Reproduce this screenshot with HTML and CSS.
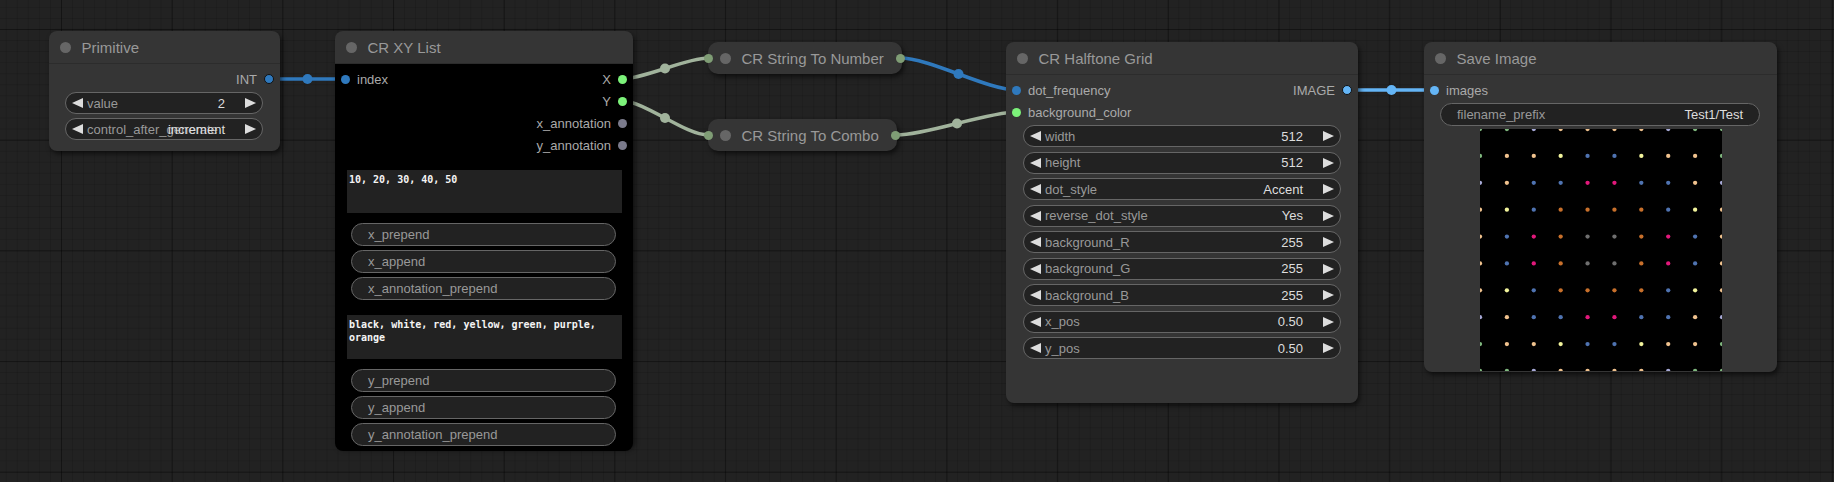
FILE: index.html
```html
<!DOCTYPE html>
<html>
<head>
  <meta charset="UTF-8">
  <title>ComfyUI - Halftone Grid</title>
  <link rel="stylesheet" href="styles.css">
</head>
<body>
  <div class="canvas">

    <!-- links between nodes -->
    <svg class="links" width="1834" height="482" viewBox="0 0 1834 482">
      <g fill="none" stroke-width="3.5">
        <path class="link-int" d="M270 79 L345 79"/>
        <path class="link-str" d="M622 79 C644 79 686 58 708 58"/>
        <path class="link-str" d="M622 101 C645 101 685 135 708 135"/>
        <path class="link-int" d="M900 58 C930 58 987 90 1017 90"/>
        <path class="link-str" d="M897 135 C927 135 987 112 1017 112"/>
        <path class="link-image" d="M1348 90 L1435 90"/>
      </g>
      <circle class="mark-int" cx="307.5" cy="79" r="5"/>
      <circle class="mark-str" cx="665" cy="68.5" r="5"/>
      <circle class="mark-str" cx="665" cy="118" r="5"/>
      <circle class="mark-int" cx="958.5" cy="74" r="5"/>
      <circle class="mark-str" cx="957" cy="123.5" r="5"/>
      <circle class="mark-image" cx="1391.5" cy="90" r="5"/>
    </svg>

    <!-- Primitive -->
    <div class="node node-primitive">
      <div class="node-title"><span class="title-dot"></span>Primitive</div>
      <div class="node-body">
        <div class="slot-row">
          <span></span>
          <span class="slot-out">INT<i class="dot dot-int ring"></i></span>
        </div>
        <div class="widgets">
          <div class="widget num">
            <i class="arrow-l"></i><span class="w-label">value</span><span class="w-value">2</span><i class="arrow-r"></i>
          </div>
          <div class="widget num">
            <i class="arrow-l"></i><span class="w-label clip">control_after_generate</span><span class="w-value">increment</span><i class="arrow-r"></i>
          </div>
        </div>
      </div>
    </div>

    <!-- CR XY List -->
    <div class="node node-xy">
      <div class="node-title"><span class="title-dot"></span>CR XY List</div>
      <div class="node-body black">
        <div class="slot-row">
          <span class="slot-in"><i class="dot dot-int"></i>index</span>
          <span class="slot-out">X<i class="dot dot-str"></i></span>
        </div>
        <div class="slot-row">
          <span></span>
          <span class="slot-out">Y<i class="dot dot-str"></i></span>
        </div>
        <div class="slot-row">
          <span></span>
          <span class="slot-out">x_annotation<i class="dot dot-any"></i></span>
        </div>
        <div class="slot-row">
          <span></span>
          <span class="slot-out">y_annotation<i class="dot dot-any"></i></span>
        </div>

        <div class="text-area first">10, 20, 30, 40, 50</div>
        <div class="widgets tall">
          <div class="widget text"><span class="w-label">x_prepend</span></div>
          <div class="widget text"><span class="w-label">x_append</span></div>
          <div class="widget text"><span class="w-label">x_annotation_prepend</span></div>
        </div>

        <div class="text-area second">black, white, red, yellow, green, purple,<br>orange</div>
        <div class="widgets tall">
          <div class="widget text"><span class="w-label">y_prepend</span></div>
          <div class="widget text"><span class="w-label">y_append</span></div>
          <div class="widget text"><span class="w-label">y_annotation_prepend</span></div>
        </div>
      </div>
    </div>

    <!-- collapsed nodes -->
    <div class="node collapsed node-to-number">
      <i class="dot dot-sage edge-in"></i>
      <span class="title-dot"></span>CR String To Number
      <i class="dot dot-sage edge-out"></i>
    </div>
    <div class="node collapsed node-to-combo">
      <i class="dot dot-sage edge-in"></i>
      <span class="title-dot"></span>CR String To Combo
      <i class="dot dot-sage edge-out"></i>
    </div>

    <!-- CR Halftone Grid -->
    <div class="node node-halftone">
      <div class="node-title"><span class="title-dot"></span>CR Halftone Grid</div>
      <div class="node-body">
        <div class="slot-row">
          <span class="slot-in"><i class="dot dot-int"></i>dot_frequency</span>
          <span class="slot-out">IMAGE<i class="dot dot-image ring"></i></span>
        </div>
        <div class="slot-row">
          <span class="slot-in"><i class="dot dot-str"></i>background_color</span>
        </div>
        <div class="widgets loose">
          <div class="widget num"><i class="arrow-l"></i><span class="w-label">width</span><span class="w-value">512</span><i class="arrow-r"></i></div>
          <div class="widget num"><i class="arrow-l"></i><span class="w-label">height</span><span class="w-value">512</span><i class="arrow-r"></i></div>
          <div class="widget num"><i class="arrow-l"></i><span class="w-label">dot_style</span><span class="w-value">Accent</span><i class="arrow-r"></i></div>
          <div class="widget num"><i class="arrow-l"></i><span class="w-label">reverse_dot_style</span><span class="w-value">Yes</span><i class="arrow-r"></i></div>
          <div class="widget num"><i class="arrow-l"></i><span class="w-label">background_R</span><span class="w-value">255</span><i class="arrow-r"></i></div>
          <div class="widget num"><i class="arrow-l"></i><span class="w-label">background_G</span><span class="w-value">255</span><i class="arrow-r"></i></div>
          <div class="widget num"><i class="arrow-l"></i><span class="w-label">background_B</span><span class="w-value">255</span><i class="arrow-r"></i></div>
          <div class="widget num"><i class="arrow-l"></i><span class="w-label">x_pos</span><span class="w-value">0.50</span><i class="arrow-r"></i></div>
          <div class="widget num"><i class="arrow-l"></i><span class="w-label">y_pos</span><span class="w-value">0.50</span><i class="arrow-r"></i></div>
        </div>
      </div>
    </div>

    <!-- Save Image -->
    <div class="node node-save">
      <div class="node-title"><span class="title-dot"></span>Save Image</div>
      <div class="node-body">
        <div class="slot-row">
          <span class="slot-in"><i class="dot dot-image"></i>images</span>
        </div>
        <div class="widgets">
          <div class="widget text tall-one"><span class="w-label">filename_prefix</span><span class="w-value">Test1/Test</span></div>
        </div>
        <div class="preview">
          <svg width="242" height="242" viewBox="0 0 90 90">
            <rect width="90" height="90" fill="#000"/>
            <g class="c-g"><circle cx="0" cy="0" r=".8"/><circle cx="10" cy="0" r=".8"/><circle cx="80" cy="0" r=".8"/><circle cx="90" cy="0" r=".8"/><circle cx="0" cy="10" r=".8"/><circle cx="90" cy="10" r=".8"/><circle cx="0" cy="80" r=".8"/><circle cx="90" cy="80" r=".8"/><circle cx="0" cy="90" r=".8"/><circle cx="10" cy="90" r=".8"/><circle cx="80" cy="90" r=".8"/><circle cx="90" cy="90" r=".8"/></g>
            <g class="c-l"><circle cx="20" cy="0" r=".8"/><circle cx="70" cy="0" r=".8"/><circle cx="0" cy="20" r=".8"/><circle cx="90" cy="20" r=".8"/><circle cx="0" cy="70" r=".8"/><circle cx="90" cy="70" r=".8"/><circle cx="20" cy="90" r=".8"/><circle cx="70" cy="90" r=".8"/></g>
            <g class="c-p"><circle cx="30" cy="0" r=".8"/><circle cx="40" cy="0" r=".8"/><circle cx="50" cy="0" r=".8"/><circle cx="60" cy="0" r=".8"/><circle cx="10" cy="10" r=".8"/><circle cx="20" cy="10" r=".8"/><circle cx="70" cy="10" r=".8"/><circle cx="80" cy="10" r=".8"/><circle cx="10" cy="20" r=".8"/><circle cx="80" cy="20" r=".8"/><circle cx="0" cy="30" r=".8"/><circle cx="90" cy="30" r=".8"/><circle cx="0" cy="40" r=".8"/><circle cx="90" cy="40" r=".8"/><circle cx="0" cy="50" r=".8"/><circle cx="90" cy="50" r=".8"/><circle cx="0" cy="60" r=".8"/><circle cx="90" cy="60" r=".8"/><circle cx="10" cy="70" r=".8"/><circle cx="80" cy="70" r=".8"/><circle cx="10" cy="80" r=".8"/><circle cx="20" cy="80" r=".8"/><circle cx="70" cy="80" r=".8"/><circle cx="80" cy="80" r=".8"/><circle cx="30" cy="90" r=".8"/><circle cx="40" cy="90" r=".8"/><circle cx="50" cy="90" r=".8"/><circle cx="60" cy="90" r=".8"/></g>
            <g class="c-y"><circle cx="30" cy="10" r=".8"/><circle cx="60" cy="10" r=".8"/><circle cx="10" cy="30" r=".8"/><circle cx="80" cy="30" r=".8"/><circle cx="10" cy="60" r=".8"/><circle cx="80" cy="60" r=".8"/><circle cx="30" cy="80" r=".8"/><circle cx="60" cy="80" r=".8"/></g>
            <g class="c-b"><circle cx="40" cy="10" r=".8"/><circle cx="50" cy="10" r=".8"/><circle cx="20" cy="20" r=".8"/><circle cx="30" cy="20" r=".8"/><circle cx="60" cy="20" r=".8"/><circle cx="70" cy="20" r=".8"/><circle cx="20" cy="30" r=".8"/><circle cx="70" cy="30" r=".8"/><circle cx="10" cy="40" r=".8"/><circle cx="80" cy="40" r=".8"/><circle cx="10" cy="50" r=".8"/><circle cx="80" cy="50" r=".8"/><circle cx="20" cy="60" r=".8"/><circle cx="70" cy="60" r=".8"/><circle cx="20" cy="70" r=".8"/><circle cx="30" cy="70" r=".8"/><circle cx="60" cy="70" r=".8"/><circle cx="70" cy="70" r=".8"/><circle cx="40" cy="80" r=".8"/><circle cx="50" cy="80" r=".8"/></g>
            <g class="c-m"><circle cx="40" cy="20" r=".8"/><circle cx="50" cy="20" r=".8"/><circle cx="20" cy="40" r=".8"/><circle cx="70" cy="40" r=".8"/><circle cx="20" cy="50" r=".8"/><circle cx="70" cy="50" r=".8"/><circle cx="40" cy="70" r=".8"/><circle cx="50" cy="70" r=".8"/></g>
            <g class="c-o"><circle cx="30" cy="30" r=".8"/><circle cx="40" cy="30" r=".8"/><circle cx="50" cy="30" r=".8"/><circle cx="60" cy="30" r=".8"/><circle cx="30" cy="40" r=".8"/><circle cx="60" cy="40" r=".8"/><circle cx="30" cy="50" r=".8"/><circle cx="60" cy="50" r=".8"/><circle cx="30" cy="60" r=".8"/><circle cx="40" cy="60" r=".8"/><circle cx="50" cy="60" r=".8"/><circle cx="60" cy="60" r=".8"/></g>
            <g class="c-a"><circle cx="40" cy="40" r=".8"/><circle cx="50" cy="40" r=".8"/><circle cx="40" cy="50" r=".8"/><circle cx="50" cy="50" r=".8"/></g>
          </svg>
        </div>
      </div>
    </div>

  </div>
</body>
</html>
```

FILE: styles.css
```css
body {
  margin: 0;
  background: #222;
  font-family: "Liberation Sans", Arial, sans-serif;
  overflow: hidden;
}
.canvas {
  position: relative;
  width: 1834px;
  height: 482px;
  overflow: hidden;
  background-color: #222;
  background-image:
    linear-gradient(to right, rgba(0,0,0,0.35) 1px, transparent 1px),
    linear-gradient(to bottom, rgba(0,0,0,0.35) 1px, transparent 1px),
    linear-gradient(to right, rgba(0,0,0,0.12) 1px, transparent 1px),
    linear-gradient(to bottom, rgba(0,0,0,0.12) 1px, transparent 1px);
  background-size: 110.7px 110.7px, 110.7px 110.7px, 11.07px 11.07px, 11.07px 11.07px;
  background-position: 61px 29px, 61px 29px, 61px 29px, 61px 29px;
}

/* links */
.links {
  position: absolute;
  left: 0;
  top: 0;
}
.link-int { stroke: #2f79bd; }
.link-str { stroke: #a1b39c; }
.link-image { stroke: #64b5f6; }
.mark-int { fill: #2f79bd; }
.mark-str { fill: #a1b39c; }
.mark-image { fill: #64b5f6; }

/* nodes */
.node {
  position: absolute;
  background: #353535;
  border-radius: 8px;
  box-shadow: 2px 3px 5px rgba(0,0,0,0.55);
  color: #aaa;
  font-size: 13px;
}
.node-title {
  height: 33px;
  display: flex;
  align-items: center;
  padding-left: 10.5px;
  font-size: 15px;
  color: #999;
  border-bottom: 1px solid #2c2c2c;
  box-sizing: border-box;
  border-radius: 8px 8px 0 0;
}
.title-dot {
  width: 11px;
  height: 11px;
  border-radius: 50%;
  background: #666;
  margin-right: 11px;
  flex-shrink: 0;
}
.node-body {
  padding-top: 4px;
}
.node-body.black {
  background: #000;
  border-radius: 0 0 8px 8px;
  height: 383px;
}

.node-primitive { left: 49px; top: 31px; width: 231px; height: 120px; }
.node-xy { left: 335px; top: 31px; width: 298px; height: 416px; }
.node-halftone { left: 1006px; top: 42px; width: 352px; height: 361px; }
.node-save { left: 1424px; top: 42px; width: 353px; height: 330px; overflow: hidden; }

/* slots */
.slot-row {
  height: 22px;
  display: flex;
  align-items: center;
  justify-content: space-between;
}
.slot-in {
  display: flex;
  align-items: center;
}
.slot-in .dot {
  margin: 0 7px 0 6px;
}
.slot-out {
  display: flex;
  align-items: center;
}
.slot-out .dot {
  margin: 0 6px 0 7px;
}
.dot {
  display: block;
  width: 9px;
  height: 9px;
  border-radius: 50%;
  box-sizing: border-box;
}
.dot-int { background: #2f79bd; }
.dot-str { background: #7cf27a; }
.dot-any { background: #7b7b8c; }
.dot-image { background: #64b5f6; }
.dot-sage { background: #7f9d75; }
.dot.ring { border: 1.5px solid #111; width: 10px; height: 10px; }

/* widgets */
.widgets {
  display: flex;
  flex-direction: column;
  gap: 4px;
  margin: 2px 17px 0 16px;
}
.widgets.loose { gap: 4.5px; margin-left: 17px; }
.widgets.tall { margin-top: 10px; }
.widget {
  height: 22px;
  display: flex;
  align-items: center;
  background: #222;
  border: 1px solid #666;
  border-radius: 12px;
  box-sizing: border-box;
  color: #999;
  white-space: nowrap;
}
.widgets.tall .widget,
.widget.tall-one { height: 23px; }
.widget.num { padding: 0 6px 0 6px; }
.widget.text { padding: 0 16px 0 16px; }
.w-label {
  flex: 1;
  margin-left: 4px;
}
.widget.text .w-label { margin-left: 0; }
.w-label.clip {
  width: 0;
  overflow: visible;
}
.w-value {
  color: #ddd;
}
.widget.num .w-value { margin-right: 20px; }
.arrow-l,
.arrow-r {
  display: block;
  width: 0;
  height: 0;
  border-top: 5.5px solid transparent;
  border-bottom: 5.5px solid transparent;
}
.arrow-l { border-right: 11px solid #ddd; }
.arrow-r { border-left: 11px solid #ddd; }

/* text areas */
.text-area {
  background: #222;
  color: #f4f4f4;
  font-family: "DejaVu Sans Mono", "Liberation Mono", monospace;
  font-weight: bold;
  font-size: 10px;
  line-height: 13px;
  padding: 3px 2px;
  box-sizing: border-box;
  margin: 0 11px 0 12px;
}
.text-area.first { margin-top: 14px; height: 43px; }
.text-area.second { margin-top: 15px; height: 44px; }

/* collapsed nodes */
.collapsed {
  height: 32px;
  display: flex;
  align-items: center;
  padding-left: 11.5px;
  box-sizing: border-box;
  border-radius: 10px;
  font-size: 15px;
  color: #999;
}
.node-to-number { left: 708px; top: 42px; width: 194px; }
.node-to-combo { left: 708px; top: 119px; width: 189px; }
.collapsed .edge-in,
.collapsed .edge-out {
  position: absolute;
  top: 11.5px;
}
.collapsed .edge-in { left: -4.5px; }
.collapsed .edge-out { right: -2.5px; }

/* image preview */
.preview {
  display: flex;
  justify-content: center;
  margin-top: 3px;
}
.preview svg { display: block; }
.c-g { fill: #7fb77e; }
.c-l { fill: #a7a9d6; }
.c-p { fill: #f0c28e; }
.c-y { fill: #f2f49c; }
.c-b { fill: #4f73b1; }
.c-m { fill: #e2187b; }
.c-o { fill: #c8702b; }
.c-a { fill: #6f6f6f; }
```
